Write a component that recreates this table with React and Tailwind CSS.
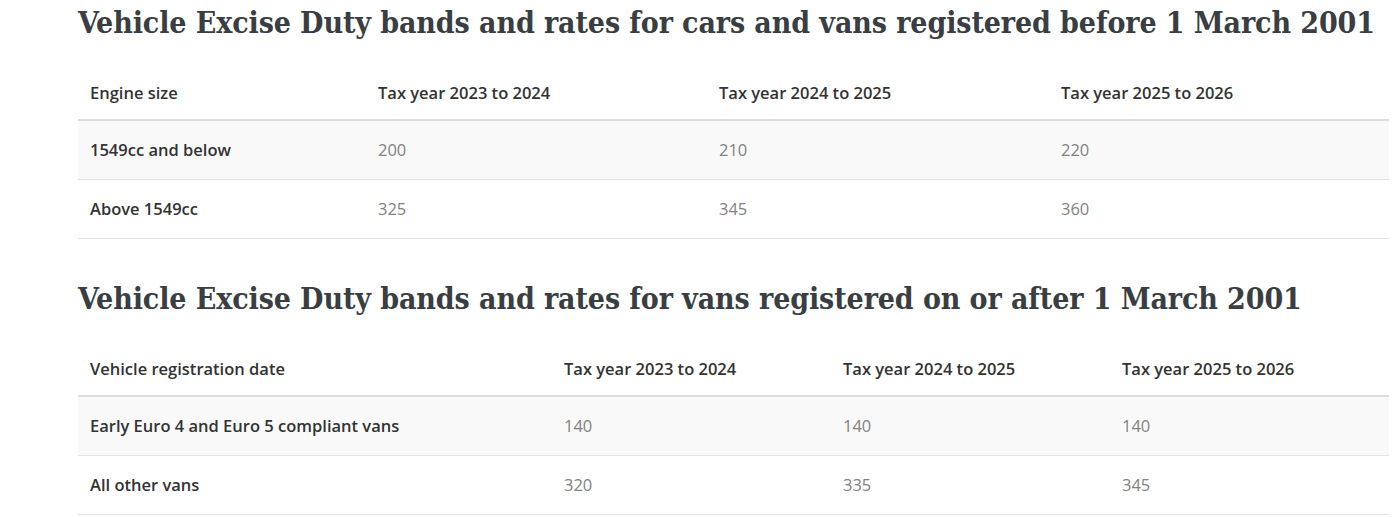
const tables = [
  {
    title: "Vehicle Excise Duty bands and rates for cars and vans registered before 1 March 2001",
    cols: ["w-[288px]", "w-[341px]", "w-[342px]", "w-[340px]"],
    head: ["Engine size", "Tax year 2023 to 2024", "Tax year 2024 to 2025", "Tax year 2025 to 2026"],
    rows: [
      ["1549cc and below", "200", "210", "220"],
      ["Above 1549cc", "325", "345", "360"],
    ],
  },
  {
    title: "Vehicle Excise Duty bands and rates for vans registered on or after 1 March 2001",
    cols: ["w-[474px]", "w-[279px]", "w-[279px]", "w-[279px]"],
    head: ["Vehicle registration date", "Tax year 2023 to 2024", "Tax year 2024 to 2025", "Tax year 2025 to 2026"],
    rows: [
      ["Early Euro 4 and Euro 5 compliant vans", "140", "140", "140"],
      ["All other vans", "320", "335", "345"],
    ],
  },
];

const RateTable = ({ title, cols, head, rows }) => (
  <section>
    <h2 className="font-['DejaVu_Serif_Condensed','DejaVu_Serif',serif] font-bold text-[30px] leading-[46px] tracking-[-0.1px] text-[#393e43] whitespace-nowrap">
      {title}
    </h2>
    <table className="mt-[22px] w-[1311px] table-fixed border-collapse text-[16.5px] leading-[26px]">
      <colgroup>
        {cols.map((c, i) => (
          <col key={i} className={c} />
        ))}
      </colgroup>
      <thead>
        <tr className="border-b-2 border-[#dddddd]">
          {head.map((h) => (
            <th key={h} className="px-3 pb-[13px] pt-[12px] text-left font-semibold text-[#333333]">
              {h}
            </th>
          ))}
        </tr>
      </thead>
      <tbody>
        {rows.map((r, i) => (
          <tr key={i} className={`border-b border-[#e3e3e3] ${i === 0 ? "bg-[#f9f9f9]" : "bg-white"}`}>
            {r.map((cell, j) => (
              <td
                key={j}
                className={`px-3 py-4 ${j === 0 ? "font-semibold text-[#333333]" : "text-[#828282]"}`}
              >
                {cell}
              </td>
            ))}
          </tr>
        ))}
      </tbody>
    </table>
  </section>
);

export default function App() {
  return (
    <div className="min-h-[517px] bg-white pl-[78px] font-['Open_Sans',sans-serif]">
      <div className="flex flex-col gap-[37px]">
        {tables.map((t) => (
          <RateTable key={t.title} {...t} />
        ))}
      </div>
    </div>
  );
}
